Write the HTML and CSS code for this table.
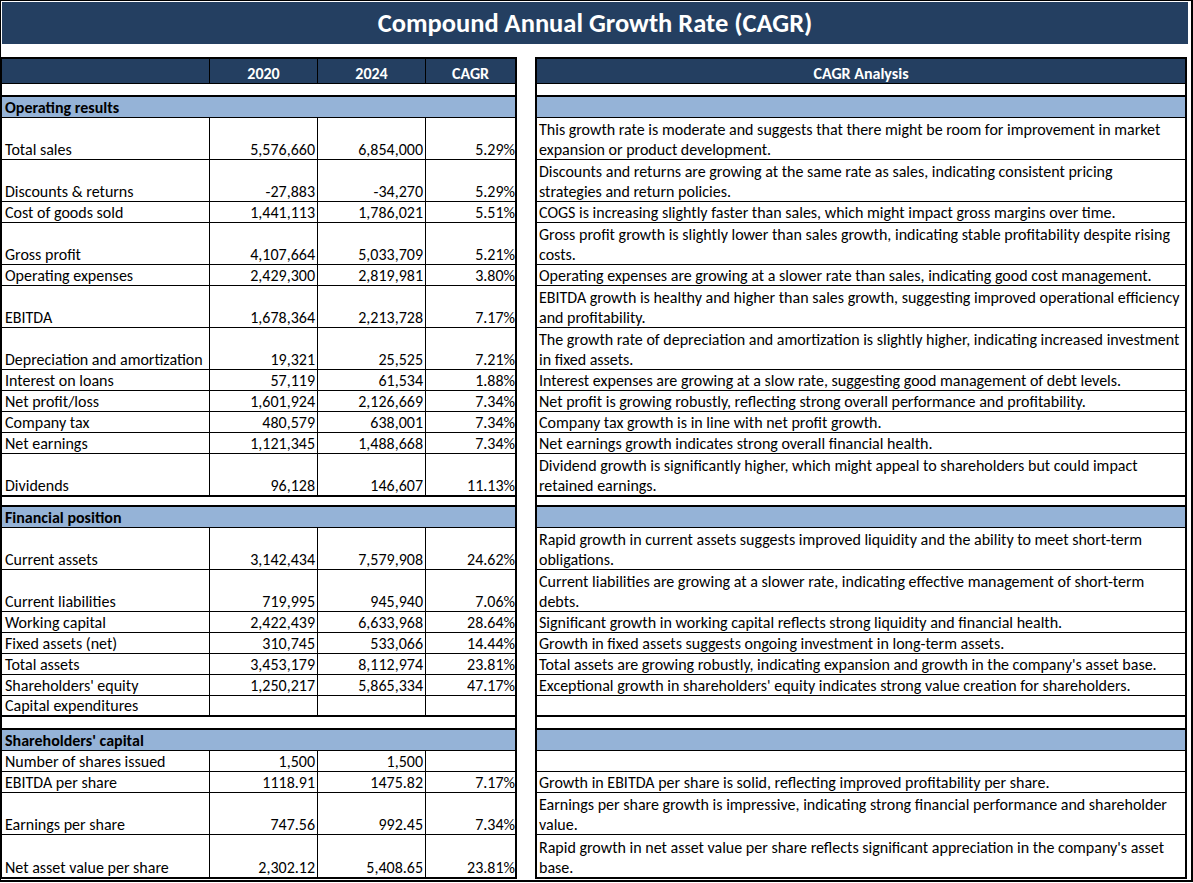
FILE: index.html
```html
<!DOCTYPE html>
<html lang="en">
<head>
<meta charset="utf-8">
<title>Compound Annual Growth Rate (CAGR)</title>
<link rel="stylesheet" href="styles.css">
</head>
<body>
<div class="frame">
  <div class="title">Compound Annual Growth Rate (CAGR)</div>
  <div class="tables">
    <div class="sheet left">
      <div class="row head"><div class="c lab"></div><div class="c th">2020</div><div class="c th">2024</div><div class="c th last">CAGR</div></div>
      <div class="row spacer"></div>
      <div class="row section"><div class="c sec">Operating results</div></div>
      <div class="row tall"><div class="c lab">Total sales</div><div class="c num">5,576,660</div><div class="c num">6,854,000</div><div class="c pct">5.29%</div></div>
      <div class="row tall"><div class="c lab">Discounts &amp; returns</div><div class="c num">-27,883</div><div class="c num">-34,270</div><div class="c pct">5.29%</div></div>
      <div class="row"><div class="c lab">Cost of goods sold</div><div class="c num">1,441,113</div><div class="c num">1,786,021</div><div class="c pct">5.51%</div></div>
      <div class="row tall"><div class="c lab">Gross profit</div><div class="c num">4,107,664</div><div class="c num">5,033,709</div><div class="c pct">5.21%</div></div>
      <div class="row"><div class="c lab">Operating expenses</div><div class="c num">2,429,300</div><div class="c num">2,819,981</div><div class="c pct">3.80%</div></div>
      <div class="row tall"><div class="c lab">EBITDA</div><div class="c num">1,678,364</div><div class="c num">2,213,728</div><div class="c pct">7.17%</div></div>
      <div class="row tall"><div class="c lab">Depreciation and amortization</div><div class="c num">19,321</div><div class="c num">25,525</div><div class="c pct">7.21%</div></div>
      <div class="row"><div class="c lab">Interest on loans</div><div class="c num">57,119</div><div class="c num">61,534</div><div class="c pct">1.88%</div></div>
      <div class="row"><div class="c lab">Net profit/loss</div><div class="c num">1,601,924</div><div class="c num">2,126,669</div><div class="c pct">7.34%</div></div>
      <div class="row"><div class="c lab">Company tax</div><div class="c num">480,579</div><div class="c num">638,001</div><div class="c pct">7.34%</div></div>
      <div class="row"><div class="c lab">Net earnings</div><div class="c num">1,121,345</div><div class="c num">1,488,668</div><div class="c pct">7.34%</div></div>
      <div class="row tall end divs"><div class="c lab">Dividends</div><div class="c num">96,128</div><div class="c num">146,607</div><div class="c pct">11.13%</div></div>
      <div class="row spacer short"></div>
      <div class="row section"><div class="c sec">Financial position</div></div>
      <div class="row tall"><div class="c lab">Current assets</div><div class="c num">3,142,434</div><div class="c num">7,579,908</div><div class="c pct">24.62%</div></div>
      <div class="row tall"><div class="c lab">Current liabilities</div><div class="c num">719,995</div><div class="c num">945,940</div><div class="c pct">7.06%</div></div>
      <div class="row"><div class="c lab">Working capital</div><div class="c num">2,422,439</div><div class="c num">6,633,968</div><div class="c pct">28.64%</div></div>
      <div class="row"><div class="c lab">Fixed assets (net)</div><div class="c num">310,745</div><div class="c num">533,066</div><div class="c pct">14.44%</div></div>
      <div class="row"><div class="c lab">Total assets</div><div class="c num">3,453,179</div><div class="c num">8,112,974</div><div class="c pct">23.81%</div></div>
      <div class="row"><div class="c lab">Shareholders' equity</div><div class="c num">1,250,217</div><div class="c num">5,865,334</div><div class="c pct">47.17%</div></div>
      <div class="row end"><div class="c lab">Capital expenditures</div><div class="c num"></div><div class="c num"></div><div class="c pct"></div></div>
      <div class="row spacer"></div>
      <div class="row section"><div class="c sec">Shareholders' capital</div></div>
      <div class="row"><div class="c lab">Number of shares issued</div><div class="c num">1,500</div><div class="c num">1,500</div><div class="c pct"></div></div>
      <div class="row"><div class="c lab">EBITDA per share</div><div class="c num">1118.91</div><div class="c num">1475.82</div><div class="c pct">7.17%</div></div>
      <div class="row tall"><div class="c lab">Earnings per share</div><div class="c num">747.56</div><div class="c num">992.45</div><div class="c pct">7.34%</div></div>
      <div class="row tall final"><div class="c lab">Net asset value per share</div><div class="c num">2,302.12</div><div class="c num">5,408.65</div><div class="c pct">23.81%</div></div>
    </div>

    <div class="sheet right">
      <div class="row head"><div class="c th">CAGR Analysis</div></div>
      <div class="row spacer"></div>
      <div class="row section"><div class="c sec"></div></div>
      <div class="row tall"><div class="c txt">This growth rate is moderate and suggests that there might be room for improvement in market<br>expansion or product development.</div></div>
      <div class="row tall"><div class="c txt">Discounts and returns are growing at the same rate as sales, indicating consistent pricing<br>strategies and return policies.</div></div>
      <div class="row"><div class="c txt">COGS is increasing slightly faster than sales, which might impact gross margins over time.</div></div>
      <div class="row tall"><div class="c txt">Gross profit growth is slightly lower than sales growth, indicating stable profitability despite rising<br>costs.</div></div>
      <div class="row"><div class="c txt">Operating expenses are growing at a slower rate than sales, indicating good cost management.</div></div>
      <div class="row tall"><div class="c txt">EBITDA growth is healthy and higher than sales growth, suggesting improved operational efficiency<br>and profitability.</div></div>
      <div class="row tall"><div class="c txt">The growth rate of depreciation and amortization is slightly higher, indicating increased investment<br>in fixed assets.</div></div>
      <div class="row"><div class="c txt">Interest expenses are growing at a slow rate, suggesting good management of debt levels.</div></div>
      <div class="row"><div class="c txt">Net profit is growing robustly, reflecting strong overall performance and profitability.</div></div>
      <div class="row"><div class="c txt">Company tax growth is in line with net profit growth.</div></div>
      <div class="row"><div class="c txt">Net earnings growth indicates strong overall financial health.</div></div>
      <div class="row tall end divs"><div class="c txt">Dividend growth is significantly higher, which might appeal to shareholders but could impact<br>retained earnings.</div></div>
      <div class="row spacer short"></div>
      <div class="row section"><div class="c sec"></div></div>
      <div class="row tall"><div class="c txt">Rapid growth in current assets suggests improved liquidity and the ability to meet short-term<br>obligations.</div></div>
      <div class="row tall"><div class="c txt">Current liabilities are growing at a slower rate, indicating effective management of short-term<br>debts.</div></div>
      <div class="row"><div class="c txt">Significant growth in working capital reflects strong liquidity and financial health.</div></div>
      <div class="row"><div class="c txt">Growth in fixed assets suggests ongoing investment in long-term assets.</div></div>
      <div class="row"><div class="c txt">Total assets are growing robustly, indicating expansion and growth in the company's asset base.</div></div>
      <div class="row"><div class="c txt">Exceptional growth in shareholders' equity indicates strong value creation for shareholders.</div></div>
      <div class="row end"><div class="c txt"></div></div>
      <div class="row spacer"></div>
      <div class="row section"><div class="c sec"></div></div>
      <div class="row"><div class="c txt"></div></div>
      <div class="row"><div class="c txt">Growth in EBITDA per share is solid, reflecting improved profitability per share.</div></div>
      <div class="row tall"><div class="c txt">Earnings per share growth is impressive, indicating strong financial performance and shareholder<br>value.</div></div>
      <div class="row tall final"><div class="c txt">Rapid growth in net asset value per share reflects significant appreciation in the company's asset<br>base.</div></div>
    </div>
  </div>
</div>
</body>
</html>
```

FILE: styles.css
```css
html, body {
  margin: 0;
  padding: 0;
  background: #ffffff;
}

body {
  font-family: Carlito, Calibri, "Liberation Sans", Arial, sans-serif;
  font-size: 16px;
  color: #000000;
}

.frame {
  box-sizing: border-box;
  width: 1193px;
  height: 882px;
  border-top: 1px solid #000;
  border-left: 1px solid #000;
  border-right: 2px solid #000;
  border-bottom: 2px solid #000;
  overflow: hidden;
}

.title {
  box-sizing: border-box;
  height: 42px;
  margin: 1px 3px 0 1px;
  background: #243f61;
  color: #ffffff;
  font-weight: bold;
  font-size: 26.5px;
  line-height: 42px;
  text-align: center;
  white-space: nowrap;
}

.tables {
  display: flex;
  align-items: flex-start;
  gap: 18px;
  margin-top: 13px;
}

.sheet {
  box-sizing: border-box;
  border: 2px solid #000;
}

.sheet.left {
  width: 516px;
  border-left-width: 1px;
}

.sheet.right {
  width: 652px;
}

.row {
  box-sizing: border-box;
  height: 21px;
  display: grid;
  border-bottom: 1px solid #000;
}

.left .row {
  grid-template-columns: 208px 108px 108px 89px;
}

.right .row {
  grid-template-columns: 1fr;
}

.row.tall { height: 42px; }
.row.end { border-bottom-width: 2px; }
.row.divs { height: 43px; }
.row.final { border-bottom: none; }

.row.head {
  height: 25px;
  background: #243f61;
}

.row.spacer {
  height: 13px;
  border-bottom-width: 2px;
  display: block;
}

.row.spacer.short { height: 10px; }

.row.section {
  background: #95b3d7;
  grid-template-columns: 1fr;
}

.c {
  box-sizing: border-box;
  display: flex;
  align-items: flex-end;
  line-height: 20px;
  white-space: nowrap;
  overflow: hidden;
  min-width: 0;
  margin-bottom: -1px;
}

.left .c {
  border-right: 1px solid #000;
}

.left .c.pct,
.left .c.last,
.left .c.sec {
  border-right: none;
}

.lab {
  padding-left: 3px;
}

.num {
  justify-content: flex-end;
  padding-right: 2px;
}

.pct {
  justify-content: flex-end;
  padding-right: 0;
}

.th {
  justify-content: center;
  color: #ffffff;
  font-weight: bold;
}

.sec {
  font-weight: bold;
  padding-left: 3px;
}

.txt {
  padding-left: 2px;
  display: block;
  align-self: end;
}
```
